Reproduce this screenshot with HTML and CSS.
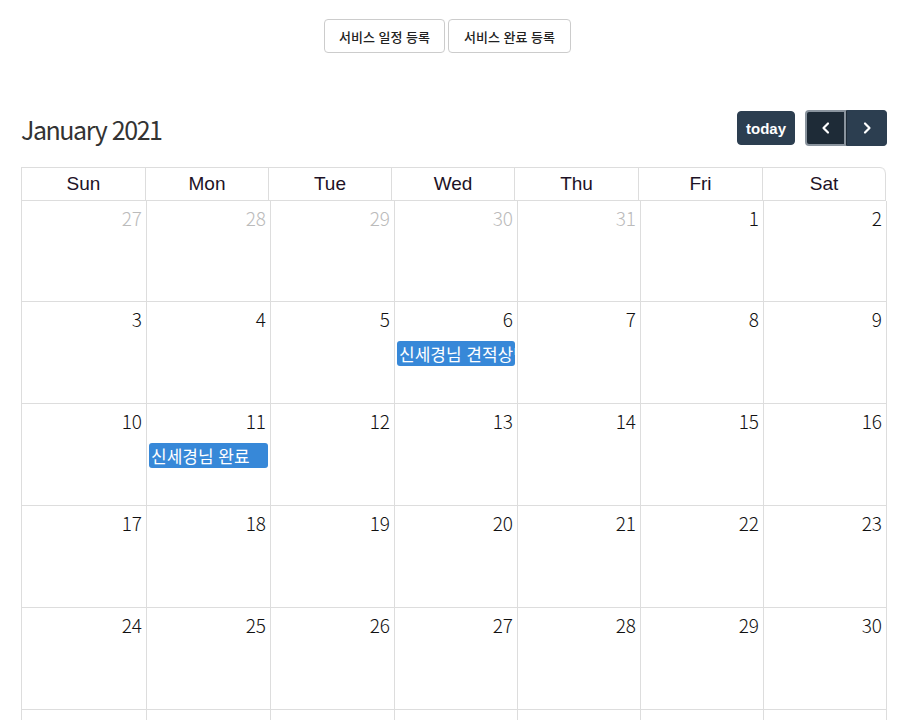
FILE: index.html
```html
<!DOCTYPE html>
<html lang="ko">
<head>
<meta charset="utf-8">
<title>Calendar</title>
<link rel="stylesheet" href="styles.css">
</head>
<body>
<div class="page">
  <div class="top-actions">
    <button class="action-btn">서비스 일정 등록</button>
    <button class="action-btn">서비스 완료 등록</button>
  </div>
  <div class="toolbar">
    <h2 class="title">January 2021</h2>
    <div class="tb-right">
      <button class="fc-btn today">today</button>
      <div class="btn-group">
        <button class="fc-btn nav prev"><svg width="14" height="14" viewBox="0 0 14 14"><path d="M9 2.5 L4.5 7 L9 11.5" fill="none" stroke="#fff" stroke-width="2.2" stroke-linecap="round" stroke-linejoin="round"/></svg></button>
        <button class="fc-btn nav next"><svg width="14" height="14" viewBox="0 0 14 14"><path d="M5 2.5 L9.5 7 L5 11.5" fill="none" stroke="#fff" stroke-width="2.2" stroke-linecap="round" stroke-linejoin="round"/></svg></button>
      </div>
    </div>
  </div>
  <div class="cal">
    <div class="head">
      <div class="hcell">Sun</div><div class="hcell">Mon</div><div class="hcell">Tue</div><div class="hcell">Wed</div><div class="hcell">Thu</div><div class="hcell">Fri</div><div class="hcell">Sat</div>
    </div>
    <div class="body">
      <div class="day other"><span class="num">27</span></div>
      <div class="day other"><span class="num">28</span></div>
      <div class="day other"><span class="num">29</span></div>
      <div class="day other"><span class="num">30</span></div>
      <div class="day other"><span class="num">31</span></div>
      <div class="day"><span class="num">1</span></div>
      <div class="day"><span class="num">2</span></div>

      <div class="day"><span class="num">3</span></div>
      <div class="day"><span class="num">4</span></div>
      <div class="day"><span class="num">5</span></div>
      <div class="day"><span class="num">6</span><div class="event">신세경님 견적상담</div></div>
      <div class="day"><span class="num">7</span></div>
      <div class="day"><span class="num">8</span></div>
      <div class="day"><span class="num">9</span></div>

      <div class="day"><span class="num">10</span></div>
      <div class="day"><span class="num">11</span><div class="event">신세경님 완료</div></div>
      <div class="day"><span class="num">12</span></div>
      <div class="day"><span class="num">13</span></div>
      <div class="day"><span class="num">14</span></div>
      <div class="day"><span class="num">15</span></div>
      <div class="day"><span class="num">16</span></div>

      <div class="day"><span class="num">17</span></div>
      <div class="day"><span class="num">18</span></div>
      <div class="day"><span class="num">19</span></div>
      <div class="day"><span class="num">20</span></div>
      <div class="day"><span class="num">21</span></div>
      <div class="day"><span class="num">22</span></div>
      <div class="day"><span class="num">23</span></div>

      <div class="day"><span class="num">24</span></div>
      <div class="day"><span class="num">25</span></div>
      <div class="day"><span class="num">26</span></div>
      <div class="day"><span class="num">27</span></div>
      <div class="day"><span class="num">28</span></div>
      <div class="day"><span class="num">29</span></div>
      <div class="day"><span class="num">30</span></div>

      <div class="day"><span class="num">31</span></div>
      <div class="day other"><span class="num">1</span></div>
      <div class="day other"><span class="num">2</span></div>
      <div class="day other"><span class="num">3</span></div>
      <div class="day other"><span class="num">4</span></div>
      <div class="day other"><span class="num">5</span></div>
      <div class="day other"><span class="num">6</span></div>
    </div>
  </div>
</div>
</body>
</html>
```
FILE: styles.css
```css
html, body {
  margin: 0;
  padding: 0;
  background: #fff;
}
body {
  font-family: "Noto Sans CJK KR", "Noto Sans", sans-serif;
  color: #212529;
}
.page {
  width: 866px;
  margin-left: 21px;
}
.top-actions {
  display: flex;
  justify-content: center;
  gap: 3px;
  padding-top: 19px;
  padding-right: 13px;
}
.action-btn {
  height: 34px;
  padding: 0 14px;
  border: 1px solid #ccc;
  border-radius: 4px;
  background: #fff;
  font-family: "Noto Sans CJK KR", sans-serif;
  font-size: 13px;
  font-weight: 500;
  color: #222;
  line-height: 1;
}
.action-btn + .action-btn {
  padding: 0 15px;
}
.toolbar {
  display: flex;
  justify-content: space-between;
  align-items: center;
  margin-top: 57px;
  margin-bottom: 21px;
  height: 36px;
}
.title {
  margin: 0;
  font-family: "Noto Sans CJK KR", "Noto Sans", sans-serif;
  font-size: 25px;
  font-weight: 400;
  color: #333;
  letter-spacing: -1.45px;
  padding-top: 2px;
}
.tb-right {
  display: flex;
  align-items: center;
  gap: 10px;
}
.fc-btn {
  background: #2c3e50;
  border: 1px solid #2c3e50;
  color: #fff;
  font-family: "Liberation Sans", Arial, sans-serif;
  font-weight: 700;
  font-size: 15px;
  height: 34px;
  border-radius: 4px;
  padding: 0 8px;
}
.btn-group {
  display: flex;
}
.nav {
  width: 41px;
  height: 36px;
  padding: 0;
  display: flex;
  align-items: center;
  justify-content: center;
}
.prev {
  border-radius: 4px 0 0 4px;
  border-color: #8a949e;
  border-width: 2px;
  background: #1e2b37;
}
.next {
  border-radius: 0 4px 4px 0;
  border-left-color: #1e2b37;
}
.cal {
  width: 866px;
}
.head {
  display: grid;
  grid-template-columns: 124px 123px 123px 123px 124px 124px 123px;
  width: 865px;
  border-top: 1px solid #ddd;
  border-left: 1px solid #ddd;
  border-bottom: 1px solid #ddd;
  border-radius: 0 6px 0 0;
  box-sizing: border-box;
}
.hcell {
  height: 32px;
  display: flex;
  align-items: center;
  justify-content: center;
  font-family: "Liberation Sans", Arial, sans-serif;
  font-size: 19px;
  color: #1d1226;
  border-right: 1px solid #ddd;
}
.hcell:last-child {
  border-top-right-radius: 6px;
}
.body {
  display: grid;
  grid-template-columns: 125px 124px 124px 123px 123px 123px 123px;
  grid-template-rows: 101px repeat(5, 102px);
  border-left: 1px solid #ddd;
}
.day {
  border-right: 1px solid #ddd;
  border-bottom: 1px solid #ddd;
  display: flex;
  flex-direction: column;
  padding: 1px 2px 0 2px;
  min-width: 0;
  overflow: hidden;
}
.num {
  align-self: flex-end;
  padding: 5px 2px 0 0;
  font-family: "Noto Sans CJK KR", sans-serif;
  font-weight: 300;
  font-size: 19px;
  line-height: 21px;
  color: #111;
}
.other .num {
  color: #bbb;
}
.event {
  margin-top: 12px;
  margin-left: 0;
  height: 25px;
  line-height: 25px;
  background: #3788d8;
  border-radius: 3px;
  color: #fff;
  font-size: 17px;
  padding-left: 2px;
  white-space: nowrap;
  overflow: hidden;
}
```
